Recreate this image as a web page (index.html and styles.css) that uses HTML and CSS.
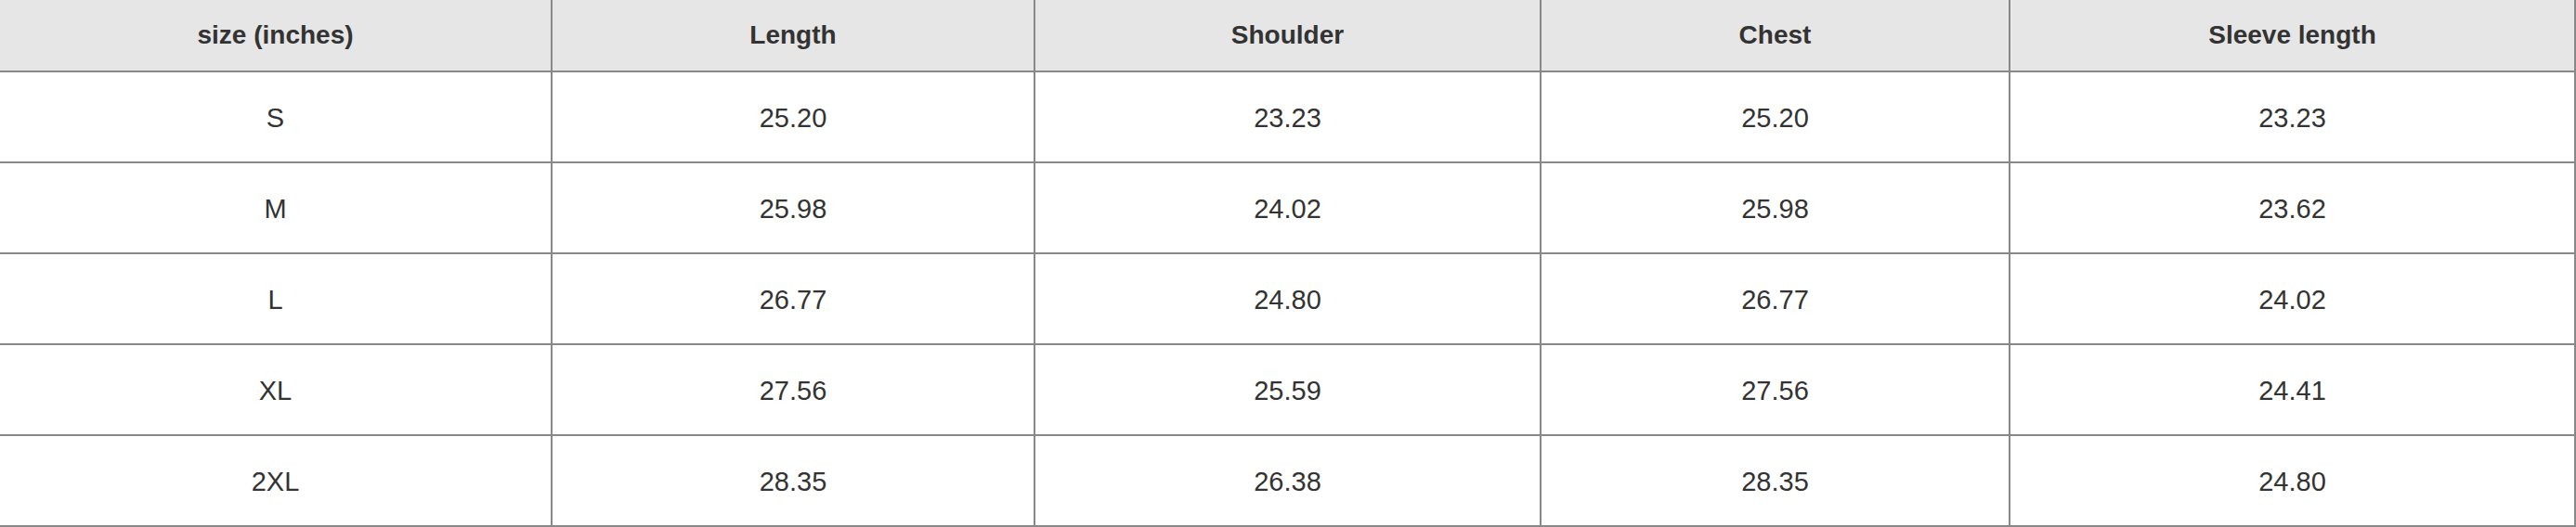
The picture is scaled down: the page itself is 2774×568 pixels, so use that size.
FILE: index.html
```html
<!DOCTYPE html>
<html lang="en">
<head>
<meta charset="utf-8">
<title>Size chart</title>
<link rel="stylesheet" href="styles.css">
</head>
<body>
<div class="chart">
  <div class="cell head">size (inches)</div>
  <div class="cell head">Length</div>
  <div class="cell head">Shoulder</div>
  <div class="cell head">Chest</div>
  <div class="cell head">Sleeve length</div>

  <div class="cell">S</div>
  <div class="cell">25.20</div>
  <div class="cell">23.23</div>
  <div class="cell">25.20</div>
  <div class="cell">23.23</div>

  <div class="cell">M</div>
  <div class="cell">25.98</div>
  <div class="cell">24.02</div>
  <div class="cell">25.98</div>
  <div class="cell">23.62</div>

  <div class="cell">L</div>
  <div class="cell">26.77</div>
  <div class="cell">24.80</div>
  <div class="cell">26.77</div>
  <div class="cell">24.02</div>

  <div class="cell">XL</div>
  <div class="cell">27.56</div>
  <div class="cell">25.59</div>
  <div class="cell">27.56</div>
  <div class="cell">24.41</div>

  <div class="cell">2XL</div>
  <div class="cell">28.35</div>
  <div class="cell">26.38</div>
  <div class="cell">28.35</div>
  <div class="cell">24.80</div>
</div>
</body>
</html>
```
FILE: styles.css
```css
html, body {
  margin: 0;
  padding: 0;
  background: #ffffff;
}

.chart {
  display: grid;
  grid-template-columns: 595px 520px 545px 505px 609px;
  grid-template-rows: 78px repeat(5, 98px);
  width: 2774px;
  font-family: "Liberation Sans", Arial, sans-serif;
  color: #333333;
}

.cell {
  box-sizing: border-box;
  display: flex;
  align-items: center;
  justify-content: center;
  padding-top: 3px;
  border-right: 2px solid #888888;
  border-bottom: 2px solid #888888;
  font-size: 29px;
  background: #ffffff;
}

.head {
  padding-top: 0;
  background: #e6e6e6;
  font-weight: 700;
  font-size: 28px;
}
```
